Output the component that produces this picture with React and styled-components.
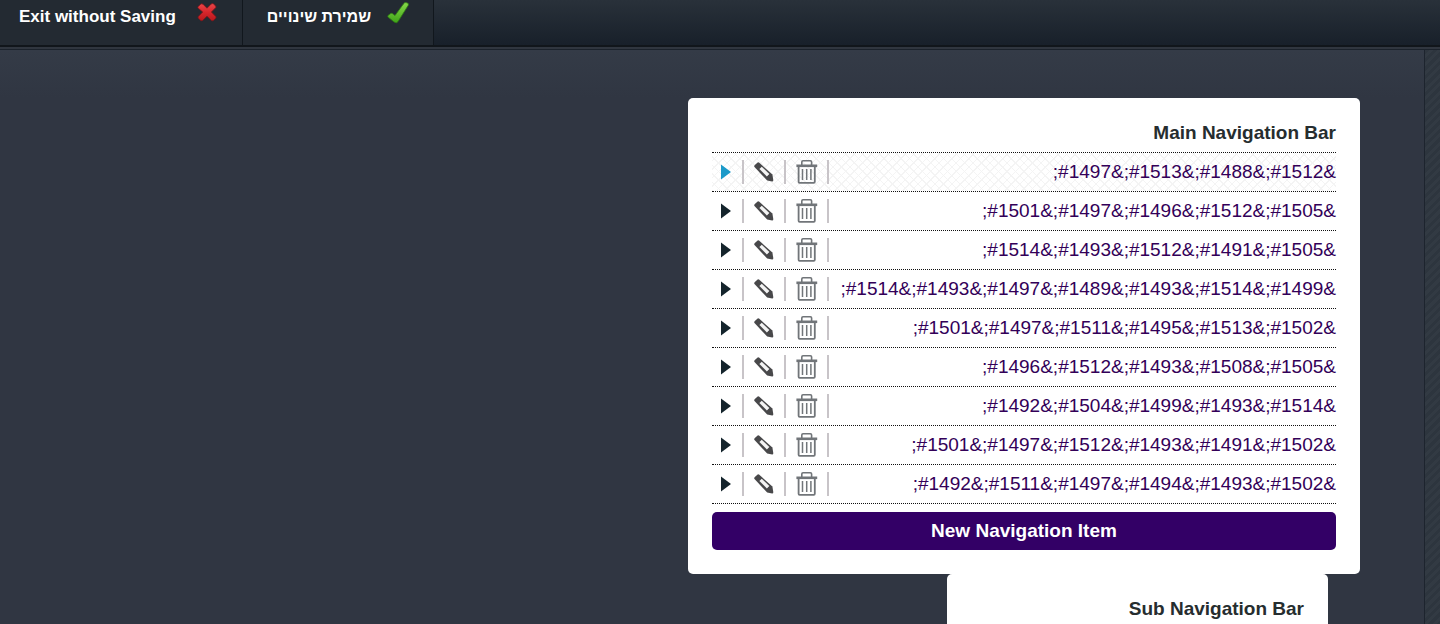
import React, { useState } from 'react'
import styled, { createGlobalStyle } from 'styled-components'

const mainItems = [
   ';#1497&;#1513&;#1488&;#1512&',
   ';#1501&;#1497&;#1496&;#1512&;#1505&',
   ';#1514&;#1493&;#1512&;#1491&;#1505&',
   ';#1514&;#1493&;#1497&;#1489&;#1493&;#1514&;#1499&',
   ';#1501&;#1497&;#1511&;#1495&;#1513&;#1502&',
   ';#1496&;#1512&;#1493&;#1508&;#1505&',
   ';#1492&;#1504&;#1499&;#1493&;#1514&',
   ';#1501&;#1497&;#1512&;#1493&;#1491&;#1502&',
   ';#1492&;#1511&;#1497&;#1494&;#1493&;#1502&'
]

const CrossIcon = () => (
   <svg width='22' height='22' viewBox='0 0 22 22' aria-hidden='true'>
      <defs>
         <linearGradient id='cross' x1='0' y1='0' x2='0' y2='1'>
            <stop offset='0' stopColor='#e8474a' />
            <stop offset='0.5' stopColor='#d8262b' />
            <stop offset='1' stopColor='#b5191d' />
         </linearGradient>
      </defs>
      <path
         d='M2 5.8 4.6 3.2Q5.8 2.4 7 3.2L11 7.2 15.2 3Q16.4 2.2 17.6 3L19.8 5.2Q20.3 6 19.7 6.7L15.4 11 19.8 15.6Q20.3 16.4 19.7 17.3L17.4 19.5Q16.4 20.1 15.4 19.5L11 15.2 6.6 19.5Q5.6 20 4.6 19.4L2.3 17.2Q1.8 16.4 2.4 15.4L6.7 11 2.2 7.2Q1.6 6.6 2 5.8Z'
         fill='url(#cross)' stroke='#7c1519' strokeWidth='0.8' />
   </svg>
)

const CheckIcon = () => (
   <svg width='24' height='24' viewBox='0 0 24 24' aria-hidden='true'>
      <defs>
         <linearGradient id='check' x1='0' y1='0' x2='0' y2='1'>
            <stop offset='0' stopColor='#86d84a' />
            <stop offset='1' stopColor='#3fa318' />
         </linearGradient>
      </defs>
      <path
         d='M1 14.6 3.6 12.6Q4.8 12 5.8 12.8L8 14.6 16.4 3Q17.4 1.6 18.8 1.6L20.6 2Q22 2.8 21.2 4.4L11 20.6Q9.4 22.8 7.2 21L1.2 16.2Q0.4 15.4 1 14.6Z'
         fill='url(#check)' stroke='#2f7d13' strokeWidth='0.8' />
   </svg>
)

const ArrowIcon = () => (
   <svg width='10' height='16' viewBox='0 0 10 16' aria-hidden='true'>
      <path d='M0 0.5 10 8 0 15.5Z' fill='currentColor' />
   </svg>
)

const PencilIcon = () => (
   <svg width='20' height='20' viewBox='0 0 20 20' aria-hidden='true'>
      <path d='M0.3 4.8Q0 4 0.6 3.3L3.6 0.6Q4.4 0 5.3 0.7L18.4 12.6 19.3 18.2Q19.3 19.4 18.2 19.4L13.2 18.6Z' fill='#48484a' />
      <path d='M5.4 6.9 7.8 4.8 15.4 12 12.9 14.4Z' fill='#f4f4f4' />
      <path d='M13.6 14.8 15.8 12.7' stroke='#48484a' strokeWidth='1' />
   </svg>
)

const TrashIcon = () => (
   <svg width='22' height='24' viewBox='0 0 22 24' fill='none' stroke='#717579' aria-hidden='true'>
      <path d='M5.8 5V2Q5.8 0.8 7 0.8H14.4Q15.6 0.8 15.6 2V5' strokeWidth='1.6' />
      <path d='M0.4 5.8H21.2' strokeWidth='2.6' />
      <path d='M2.6 7V21.8Q2.6 22.8 3.6 22.8H17.8Q18.8 22.8 18.8 21.8V7' strokeWidth='1.8' />
      <path d='M6.5 9V20M10.7 9V20M14.9 9V20' strokeWidth='1.5' />
   </svg>
)

const App = () => {
   const [selected, setSelected] = useState(0)

   return (
      <Page>
         <GlobalStyle />
         <Toolbar>
            <ToolButton $gap={20}>Exit without Saving <CrossIcon /></ToolButton>
            <ToolButton $gap={16}><HebrewLabel lang='he'>שמירת שינויים</HebrewLabel> <CheckIcon /></ToolButton>
         </Toolbar>
         <Content>
            <Workspace>
               <Panel $width={672}>
                  <PanelTitle>Main Navigation Bar</PanelTitle>
                  <NavList>
                     {mainItems.map((item, i) => (
                        <NavRow key={item} $active={i === selected}>
                           <ExpandBTN aria-label='Expand' onClick={() => setSelected(i)}><ArrowIcon /></ExpandBTN>
                           <Action $wide={42} aria-label='Edit'><PencilIcon /></Action>
                           <Action $wide={43} aria-label='Delete'><TrashIcon /></Action>
                           <NavLink href='#'>{item}</NavLink>
                        </NavRow>
                     ))}
                  </NavList>
                  <NewItemBTN>New Navigation Item</NewItemBTN>
               </Panel>
               <Panel $width={381} $sub>
                  <PanelTitle>Sub Navigation Bar</PanelTitle>
               </Panel>
            </Workspace>
            <SideStrip />
         </Content>
      </Page>
   )
}

export default App


//CSS IN JS
const GlobalStyle = createGlobalStyle`
   * {
      box-sizing: border-box;
   }
   body {
      margin: 0;
      font-family: "Liberation Sans", Arial, sans-serif;
      background: #2f3541;
   }
   button {
      font-family: inherit;
      cursor: pointer;
   }
`;

const Page = styled.div`
   display: flex;
   flex-direction: column;
   height: 100vh;
   overflow: hidden;
`;

const Toolbar = styled.header`
   display: flex;
   flex: none;
   height: 47px;
   background: linear-gradient(#29313a, #18202a);
   border-bottom: 2px solid #11161b;
`;

const ToolButton = styled.button`
   display: flex;
   align-items: flex-start;
   gap: ${props => props.$gap}px;
   padding: 1px 24px 0 19px;
   border: none;
   border-right: 1px solid #11171d;
   background: #232a32;
   color: #fff;
   font-size: 17px;
   font-weight: 700;
   line-height: 32px;
   & + & {
      padding: 1px 22px 0 24px;
   }
`;

const HebrewLabel = styled.span`
   font-size: 16px;
`;

const Content = styled.div`
   display: flex;
   flex: 1;
   min-height: 0;
   border-top: 2px solid #30363f;
`;

const Workspace = styled.main`
   display: flex;
   flex: 1;
   flex-direction: column;
   align-items: flex-end;
   padding: 48px 64px 0 24px;
   border-top: 1px solid #1b222b;
   background: linear-gradient(#343b47, #303642 48px);
`;

const SideStrip = styled.aside`
   width: 16px;
   border-top: 1px solid #1b222b;
   border-left: 1px solid #1d242e;
   background: repeating-linear-gradient(135deg, #2d353e 0 3px, #323a43 3px 6px);
`;

const Panel = styled.section`
   flex: ${props => props.$sub ? '1' : 'none'};
   width: 100%;
   max-width: ${props => props.$width}px;
   margin-right: ${props => props.$sub ? '32px' : '0'};
   padding: 24px;
   border-radius: 5px;
   background: #fff;
`;

const PanelTitle = styled.h2`
   margin: 0;
   padding-bottom: 8px;
   color: #262d2f;
   font-size: 19px;
   line-height: 22px;
   text-align: right;
`;

const NavList = styled.ul`
   margin: 0 0 8px;
   padding: 0;
   border-top: 1px dotted #111;
   list-style: none;
`;

const NavRow = styled.li`
   display: flex;
   align-items: center;
   height: 39px;
   border-bottom: 1px dotted #111;
   color: ${props => props.$active ? '#1c9ac9' : '#14242c'};
   background: ${props => props.$active
      ? 'repeating-linear-gradient(45deg, #f4f4f4 0 1px, transparent 1px 6px), repeating-linear-gradient(-45deg, #f4f4f4 0 1px, transparent 1px 6px)'
      : '#fff'};
`;

const Action = styled.button`
   display: flex;
   align-items: center;
   justify-content: center;
   flex: none;
   width: ${props => props.$wide}px;
   height: 24px;
   padding: 0;
   border: none;
   border-right: 2px solid #c8c4c8;
   background: none;
   color: inherit;
`;

const ExpandBTN = styled(Action)`
   width: 32px;
   padding-right: 2px;
`;

const NavLink = styled.a`
   flex: 1;
   color: #330058;
   font-size: 19px;
   text-align: right;
   text-decoration: none;
   white-space: nowrap;
   &:hover {
      text-decoration: underline;
   }
`;

const NewItemBTN = styled.button`
   width: 100%;
   height: 38px;
   border: none;
   border-radius: 5px;
   background: #330066;
   color: #fff;
   font-size: 19px;
   font-weight: 700;
   &:hover {
      background: #44107a;
   }
`;
